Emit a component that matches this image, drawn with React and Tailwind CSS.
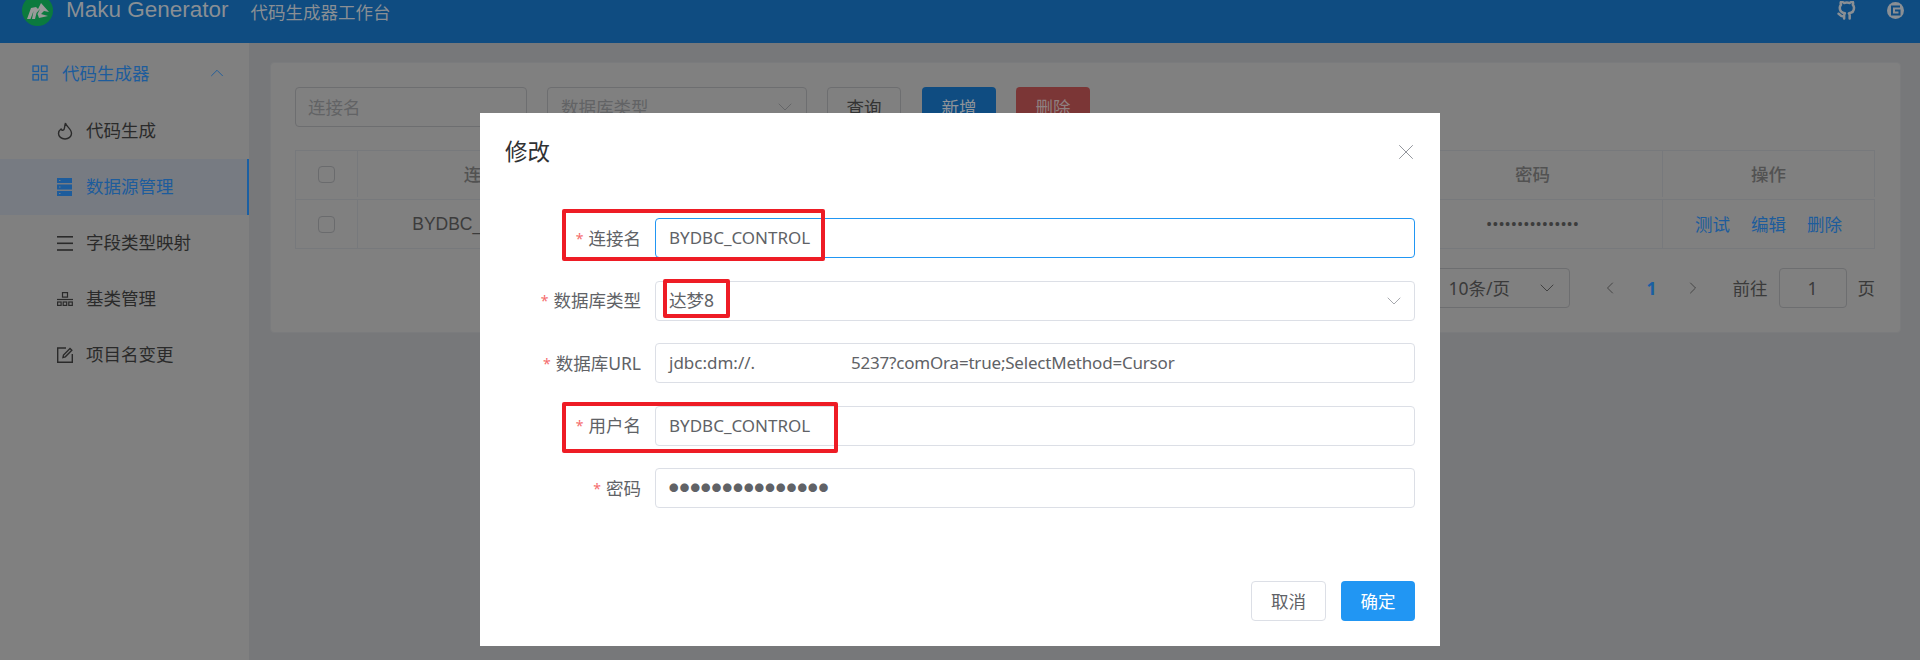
import React from 'react';
import { ChevronUp, ChevronDown, ChevronLeft, ChevronRight, X } from 'lucide-react';
import { FiGithub } from 'react-icons/fi';

const font = { fontFamily: '"Noto Sans", "Noto Sans CJK SC", sans-serif' };

function Field({ label, children, className = '' }) {
  return (
    <div className="flex h-10 mb-[22.5px] items-center">
      <div className="w-[175px] pr-[14px] flex items-center justify-end text-[17.5px] text-[#606266] shrink-0">
        <span className="text-[#f56c6c] text-[14px] mr-[5px]">*</span>
        {label}
      </div>
      <div className={`flex-1 h-10 rounded border px-[13px] flex items-center text-[17px] text-[#606266] ${className}`}>
        {children}
      </div>
    </div>
  );
}

function SideItem({ icon, text, active }) {
  return (
    <div className={`h-14 flex items-center pl-[57px] text-[17.5px] ${active ? 'bg-[#777b82] border-r-2 border-[#1a5fa3] text-[#1d5c9c]' : 'text-[#2a2a2a]'}`}>
      <span className="w-[29px] flex items-center shrink-0">{icon}</span>
      <span className="pb-[2px]">{text}</span>
    </div>
  );
}

function Cell({ className = '', children }) {
  return <div className={`flex items-center justify-center border-r border-[#77797c] text-[17.5px] shrink-0 ${className}`}>{children}</div>;
}

export default function App() {
  return (
    <div className="relative w-[1920px] h-[660px] overflow-hidden bg-[#77787a]" style={font}>
      {/* header */}
      <header className="h-[43px] bg-[#0f4c81] flex items-start text-[#8a8f94]">
        <div className="ml-[22px] -mt-[5px] w-[31px] h-[31px] rounded-full bg-[#0b7a3e] flex items-center justify-center shrink-0">
          <svg width="24" height="18" viewBox="0 0 24 18" fill="#9a9a9a">
            <path d="M1 17 L5 6 L10 5 L12 7 L15 1 L23 10 L18 9 L15 12 L22 14 L13 16 L11.500 12 L14 7 L10.500 11 L9 17 L6 17 L7.500 9 L4.500 17 Z" />
          </svg>
        </div>
        <span className="ml-[13px] text-[22.5px] leading-[20px] font-['Liberation_Sans']">Maku Generator</span>
        <span className="ml-[22px] mt-[1px] text-[17.5px] leading-[22px]">代码生成器工作台</span>
        <div className="ml-auto flex items-center gap-[31px] mr-[16px] mt-[1px]">
          <FiGithub size={19} strokeWidth={3.2} color="#8a8f94" />
          <svg width="17" height="17" viewBox="0 0 17 17">
            <circle cx="8.500" cy="8.500" r="8.500" fill="#8a8f94" />
            <path d="M13 4.500 H5 V12.500 H12.500 V8.500 H8" fill="none" stroke="#0f4c81" strokeWidth="2" />
          </svg>
        </div>
      </header>

      <div className="flex h-[617px]">
        {/* sidebar */}
        <aside className="w-[249px] shrink-0 bg-[#808080] pt-[2px]">
          <div className="h-[58px] pb-[2px] flex items-center pl-8 text-[17.5px] text-[#1d5c9c]">
            <svg width="16" height="16" viewBox="0 0 16 16" fill="none" stroke="#1d5c9c" strokeWidth="1.300">
              <rect x="1" y="1" width="5.500" height="5.500" />
              <rect x="9.500" y="1" width="5.500" height="5.500" />
              <rect x="1" y="9.500" width="5.500" height="5.500" />
              <rect x="9.500" y="9.500" width="5.500" height="5.500" />
            </svg>
            <span className="ml-[14px]">代码生成器</span>
            <ChevronUp size={22} strokeWidth={1} className="ml-auto mr-[21px]" />
          </div>
          <SideItem icon={
            <svg width="16" height="18" viewBox="0 0 16 18" fill="none" stroke="#2a2a2a" strokeWidth="1.400">
              <path d="M8.500 1 C8.500 4 14.500 6.500 14.500 11.500 A6.500 5.500 0 0 1 1.500 11.500 C1.500 9.500 2.500 8 4 7 C4.500 8.500 6 8.500 7 7.500 C8 5.500 7.500 3 8.500 1 Z" />
            </svg>
          } text="代码生成" />
          <SideItem active icon={
            <svg width="15" height="18" viewBox="0 0 15 18" fill="#1d5c9c">
              <rect x="0" y="0" width="15" height="5" />
              <rect x="0" y="6.500" width="15" height="5" />
              <rect x="0" y="13" width="15" height="5" />
              <rect x="2" y="2" width="1.500" height="1" fill="#777b82" />
              <rect x="2" y="8.500" width="1.500" height="1" fill="#777b82" />
              <rect x="2" y="15" width="1.500" height="1" fill="#777b82" />
            </svg>
          } text="数据源管理" />
          <SideItem icon={
            <svg width="16" height="15" viewBox="0 0 16 15" fill="#2a2a2a">
              <rect x="0" y="0" width="16" height="1.600" />
              <rect x="0" y="6.500" width="16" height="1.600" />
              <rect x="0" y="13.200" width="16" height="1.600" />
            </svg>
          } text="字段类型映射" />
          <SideItem icon={
            <svg width="16" height="14" viewBox="0 0 16 14" fill="none" stroke="#2a2a2a" strokeWidth="1.200">
              <rect x="5.500" y="0.600" width="5" height="4.500" />
              <path d="M0 7.500 H16" />
              <rect x="0.600" y="10" width="3.500" height="3.400" />
              <rect x="6.200" y="10" width="3.500" height="3.400" />
              <rect x="11.800" y="10" width="3.500" height="3.400" />
            </svg>
          } text="基类管理" />
          <SideItem icon={
            <svg width="16" height="16" viewBox="0 0 16 16" fill="none" stroke="#2a2a2a" strokeWidth="1.400">
              <path d="M9 1 H0.700 V15.300 H15.300 V7" />
              <path d="M6 10.500 L6.500 8 L13 1.500 L14.800 3.300 L8.300 9.800 Z" />
            </svg>
          } text="项目名变更" />
        </aside>

        {/* main */}
        <main className="flex-1 pt-[19px] pl-[21px] pr-[19px]">
          <div className="h-[271px] rounded bg-[#808080] border border-[#7a7b7d] pt-6 pl-6 pr-[25px]">
            <div className="flex gap-[20px] h-10 text-[17.5px]">
              <div className="w-[232px] h-10 rounded border border-[#6d6e70] px-3 flex items-center text-[#626365]">连接名</div>
              <div className="w-[260px] h-10 rounded border border-[#6d6e70] pl-[13px] pr-[9px] flex items-center justify-between text-[#626365]">
                数据库类型
                <ChevronDown size={24} strokeWidth={0.9} />
              </div>
              <div className="w-[74px] mr-[1px] h-10 rounded border border-[#6d6e70] flex items-center justify-center text-[#333]">查询</div>
              <div className="w-[74px] h-10 rounded bg-[#0f4c81] flex items-center justify-center text-[#8f9499]">新增</div>
              <div className="w-[74px] h-10 rounded bg-[#7b3636] flex items-center justify-center text-[#8f8080]">删除</div>
            </div>
            <div className="mt-[23px] border-t border-l border-[#77797c] text-[#3c3c3c]">
              <div className="flex h-[49px] pb-[2px] border-b border-[#77797c] font-medium text-[#525252]">
                <Cell className="w-[62px]"><span className="w-[17px] h-[17px] rounded-sm border border-[#6a6b6d]" /></Cell>
                <Cell className="w-[265px]">连接名</Cell>
                <Cell className="w-[780px]" />
                <Cell className="w-[260px]">密码</Cell>
                <Cell className="w-[212px]">操作</Cell>
              </div>
              <div className="flex h-[49px] border-b border-[#77797c]">
                <Cell className="w-[62px]"><span className="w-[17px] h-[17px] rounded-sm border border-[#6a6b6d]" /></Cell>
                <Cell className="w-[265px] font-['Liberation_Sans']">BYDBC_CONTROL</Cell>
                <Cell className="w-[780px]" />
                <Cell className="w-[260px]"><span className="text-[16.5px]">•••••••••••••••</span></Cell>
                <Cell className="w-[212px] gap-[21px] text-[#1d5c9c]"><span>测试</span><span>编辑</span><span>删除</span></Cell>
              </div>
            </div>
            <div className="mt-[19px] flex items-center justify-end h-10 text-[17.5px] text-[#3a3a3a]">
              <div className="w-[143px] h-10 rounded border border-[#6d6e70] flex items-center justify-between pl-[20px] pr-[10px]">
                10条/页
                <ChevronDown size={24} strokeWidth={0.9} />
              </div>
              <ChevronLeft size={20} strokeWidth={1} className="ml-[30px]" />
              <span className="ml-[26px] font-bold text-[#1a5fa3]">1</span>
              <ChevronRight size={20} strokeWidth={1} className="ml-[26px]" />
              <span className="ml-[30px]">前往</span>
              <div className="ml-[11px] w-[68px] h-10 rounded border border-[#6d6e70] flex items-center justify-center">1</div>
              <span className="ml-[11px]">页</span>
            </div>
          </div>
        </main>
      </div>

      {/* dialog */}
      <div className="absolute left-[480px] top-[113px] w-[960px] h-[533px] bg-white flex flex-col">
        <div className="flex items-center justify-between h-[78px] pl-[25px] pr-[21px]">
          <span className="text-[22.5px] text-[#303133]">修改</span>
          <X size={26} strokeWidth={0.9} className="text-[#909399]" />
        </div>
        <div className="pr-[25px] pt-[27px]">
          <Field label="连接名" className="border-[#2196f3]">BYDBC_CONTROL</Field>
          <Field label="数据库类型" className="border-[#dcdfe6] justify-between">
            <span className="text-[17.5px]">达梦8</span>
            <ChevronDown size={24} strokeWidth={0.8} className="text-[#909399] -mr-[5px]" />
          </Field>
          <Field label="数据库URL" className="border-[#dcdfe6]">
            <span className="w-[182px] shrink-0">jdbc:dm://.</span>
            <span className="tracking-[-0.2px]">5237?comOra=true;SelectMethod=Cursor</span>
          </Field>
          <Field label="用户名" className="border-[#dcdfe6]">BYDBC_CONTROL</Field>
          <Field label="密码" className="border-[#dcdfe6]"><span className="text-[9.5px] tracking-[1.2px]">●●●●●●●●●●●●●●●</span></Field>
        </div>
        <div className="mt-auto flex justify-end gap-[15px] pr-[25px] pb-[25px] text-[17.5px]">
          <button className="w-[75px] h-10 rounded border border-[#dcdfe6] text-[#606266]">取消</button>
          <button className="w-[74px] h-10 rounded bg-[#2196f3] text-white">确定</button>
        </div>
      </div>

      {/* annotations drawn over the screenshot */}
      <div className="absolute left-[562px] top-[209px] w-[263px] h-[52px] border-[4px] border-[#ee1c25] rounded-[2px]" />
      <div className="absolute left-[663px] top-[279px] w-[67px] h-[39px] border-[4px] border-[#ee1c25] rounded-[2px]" />
      <div className="absolute left-[562px] top-[402px] w-[276px] h-[51px] border-[4px] border-[#ee1c25] rounded-[2px]" />
    </div>
  );
}
